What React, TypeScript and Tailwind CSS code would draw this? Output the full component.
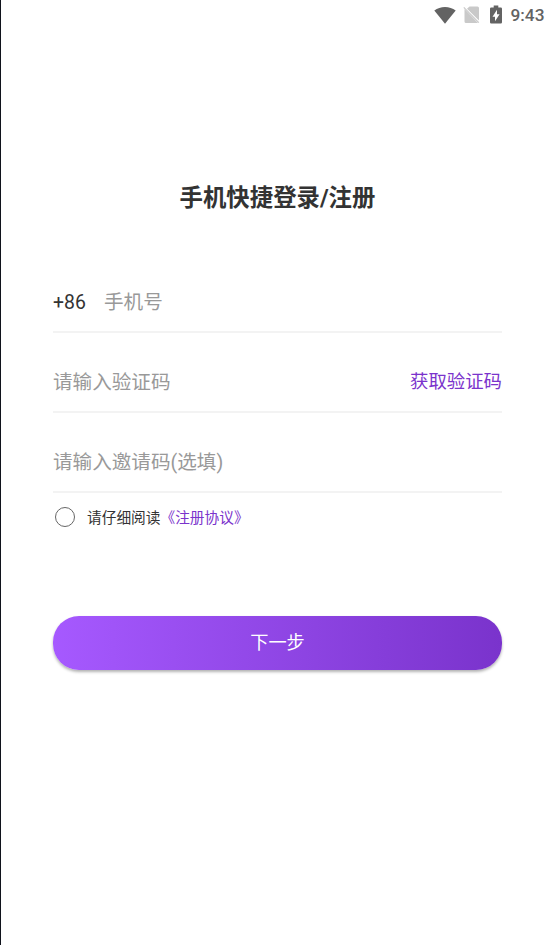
import React from "react";

function StatusBar() {
  return (
    <div className="flex h-[29px] items-center justify-end pr-[8.500px] text-[#636363]">
      <svg className="mr-[7px] h-[18px] w-[22px]" viewBox="0 0 22 18" fill="#636363">
        <path d="M0.3 4.6C3.4 2.2 7 1 11 1s7.600 1.200 10.700 3.600L11 17.800z" />
      </svg>
      <svg className="mr-[10px] h-[19px] w-[17px]" viewBox="0 0 17 19">
        <path d="M6.500 1.500H14.500a1.500 1.500 0 0 1 1.500 1.500V15.500L4 3.700zM1.500 4L15 18H3A1.500 1.500 0 0 1 1.500 16.500z" fill="#c9c9c9" />
        <path d="M0.800 2.300L15.800 17.700" stroke="#c9c9c9" strokeWidth="1.200" />
      </svg>
      <svg className="mr-[8px] h-[19px] w-[12px]" viewBox="0 0 12 19">
        <path d="M3.700 0.500h4.600v2h2.500a1.200 1.200 0 0 1 1.200 1.200v13.600a1.200 1.200 0 0 1-1.200 1.200H1.200A1.200 1.200 0 0 1 0 17.300V3.700a1.200 1.200 0 0 1 1.200-1.200h2.500z" fill="#636363" />
        <path d="M7 4.800v4.500h2.600L5 16.300v-4.600H2.500z" fill="#fff" />
      </svg>
      <span className="font-[Roboto] text-[17.300px] leading-[20px] font-medium">9:43</span>
    </div>
  );
}

function Field({ prefix, hint, action }: { prefix?: string; hint: string; action?: string }) {
  return (
    <div className="flex h-20 items-center border-b-2 border-[#f3f3f3] pt-[20px] text-[19.600px] text-[#999]">
      {prefix && <span className="w-[51px] translate-y-px text-[19.400px] text-[#333]">{prefix}</span>}
      <span className="flex-1 translate-y-px">{hint}</span>
      {action && <button className="text-[18.400px] text-[#7b33cc]">{action}</button>}
    </div>
  );
}

export default function App() {
  return (
    <div className="h-[945px] w-[553px] overflow-hidden border-l border-[#10131c] bg-white font-[Roboto,'Noto_Sans_CJK_SC',sans-serif] whitespace-nowrap">
      <StatusBar />
      <main className="pr-[51px] pl-[52px]">
        <h1 className="mt-[151px] text-center text-[23.400px] leading-[36px] font-bold text-[#333]">手机快捷登录/注册</h1>
        <form className="mt-[37px]">
          <Field prefix="+86" hint="手机号" />
          <Field hint="请输入验证码" action="获取验证码" />
          <Field hint="请输入邀请码(选填)" />
          <div className="mt-[12px] flex h-6 items-center text-[14.700px] leading-6 text-[#333]">
            <span className="mr-[12px] ml-[2px] size-5 rounded-full border-[1.500px] border-[#666]" />
            <span className="translate-y-px">请仔细阅读</span>
            <span className="translate-y-px text-[#7b33cc]">《注册协议》</span>
          </div>
          <button
            type="button"
            className="mt-[87px] flex h-[54px] w-full items-center justify-center rounded-[26px] bg-linear-to-r from-[#a659ff] to-[#7a33cc] text-[18.200px] text-white shadow-[0_2px_3px_rgba(0,0,0,0.3)]"
          >
            下一步
          </button>
        </form>
      </main>
    </div>
  );
}
